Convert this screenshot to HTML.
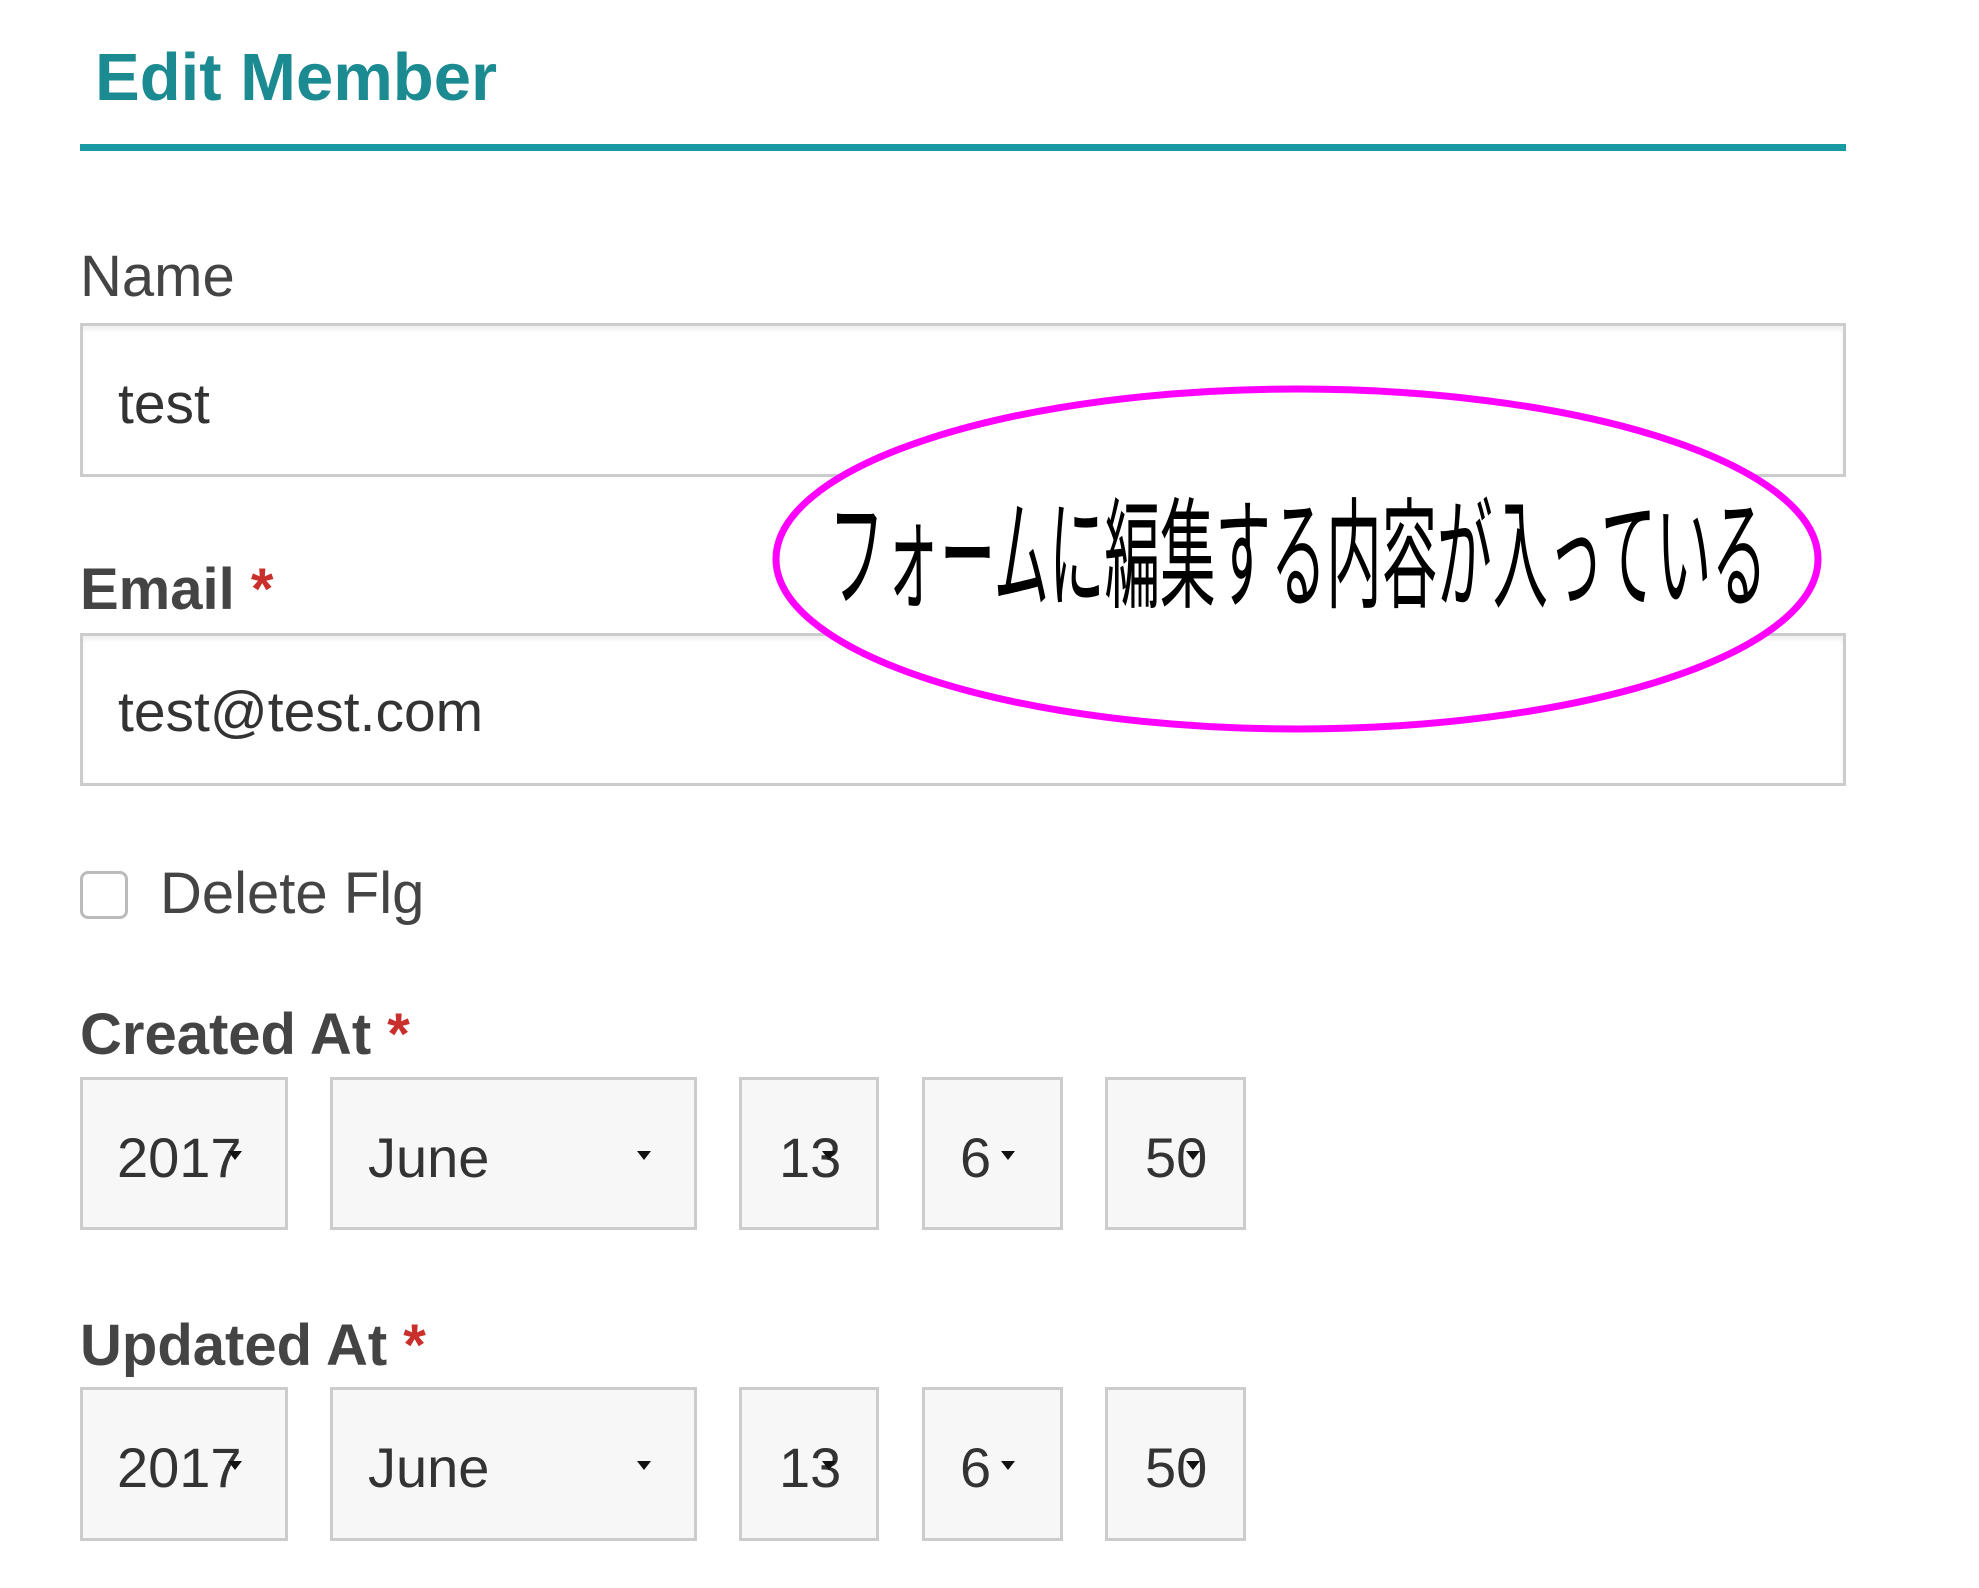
<!DOCTYPE html>
<html><head><meta charset="utf-8"><style>
body{margin:0;width:1979px;height:1588px;background:#fff;position:relative;overflow:hidden;font-family:"Liberation Sans",Arial,sans-serif;}
.a{position:absolute;line-height:1;white-space:nowrap;font-family:"Liberation Sans",Arial,sans-serif;}
.box{position:absolute;box-sizing:border-box;border:3px solid #ccc;}
.inp{background:#fff;box-shadow:inset 0 4px 4px rgba(0,0,0,.06);}
.sel{background:#f7f7f7;}
.t{font-size:56px;color:#333;}
.tri{position:absolute;width:0;height:0;border-left:7px solid transparent;border-right:7px solid transparent;border-top:9px solid #111;}
.star{color:#c9302c;}
</style></head><body>
<div class="a" style="left:95px;top:44px;font-size:67px;font-weight:bold;color:#1b8a91;">Edit Member</div>
<div style="position:absolute;left:80px;top:144px;width:1766px;height:7px;background:#1a9aa3;"></div>

<div class="a" style="left:80px;top:248px;font-size:58px;color:#444;">Name</div>
<div class="box inp" style="left:80px;top:323px;width:1766px;height:154px;"></div>
<div class="a t" style="left:118px;top:376px;font-size:57px;">test</div>

<div class="a" style="left:80px;top:561px;font-size:58px;font-weight:bold;color:#444;">Email <span class="star">*</span></div>
<div class="box inp" style="left:80px;top:633px;width:1766px;height:153px;"></div>
<div class="a t" style="left:118px;top:684px;font-size:57px;">test@test.com</div>

<div style="position:absolute;left:80px;top:871px;width:48px;height:48px;box-sizing:border-box;border:3px solid #bbb;border-radius:8px;background:#fff;"></div>
<div class="a" style="left:160px;top:865px;font-size:58px;color:#444;">Delete Flg</div>

<div class="a" style="left:80px;top:1006px;font-size:58px;font-weight:bold;color:#444;">Created At <span class="star">*</span></div>
<div class="box sel" style="left:80px;top:1077px;width:208px;height:153px;"></div>
<div class="box sel" style="left:330px;top:1077px;width:367px;height:153px;"></div>
<div class="box sel" style="left:739px;top:1077px;width:140px;height:153px;"></div>
<div class="box sel" style="left:922px;top:1077px;width:141px;height:153px;"></div>
<div class="box sel" style="left:1105px;top:1077px;width:141px;height:153px;"></div>
<div class="a t" style="left:117px;top:1130px;">2017</div>
<div class="a t" style="left:368px;top:1130px;">June</div>
<div class="a t" style="left:779px;top:1130px;">13</div>
<div class="a t" style="left:960px;top:1130px;">6</div>
<div class="a t" style="left:1145px;top:1130px;">50</div>
<div class="tri" style="left:228px;top:1151px;"></div>
<div class="tri" style="left:637px;top:1151px;"></div>
<div class="tri" style="left:822px;top:1151px;"></div>
<div class="tri" style="left:1001px;top:1151px;"></div>
<div class="tri" style="left:1186px;top:1151px;"></div>

<div class="a" style="left:80px;top:1317px;font-size:58px;font-weight:bold;color:#444;">Updated At <span class="star">*</span></div>
<div class="box sel" style="left:80px;top:1387px;width:208px;height:154px;"></div>
<div class="box sel" style="left:330px;top:1387px;width:367px;height:154px;"></div>
<div class="box sel" style="left:739px;top:1387px;width:140px;height:154px;"></div>
<div class="box sel" style="left:922px;top:1387px;width:141px;height:154px;"></div>
<div class="box sel" style="left:1105px;top:1387px;width:141px;height:154px;"></div>
<div class="a t" style="left:117px;top:1440px;">2017</div>
<div class="a t" style="left:368px;top:1440px;">June</div>
<div class="a t" style="left:779px;top:1440px;">13</div>
<div class="a t" style="left:960px;top:1440px;">6</div>
<div class="a t" style="left:1145px;top:1440px;">50</div>
<div class="tri" style="left:228px;top:1461px;"></div>
<div class="tri" style="left:637px;top:1461px;"></div>
<div class="tri" style="left:822px;top:1461px;"></div>
<div class="tri" style="left:1001px;top:1461px;"></div>
<div class="tri" style="left:1186px;top:1461px;"></div>

<svg style="position:absolute;left:0;top:0" width="1979" height="1588">
<ellipse cx="1297" cy="559" rx="521" ry="170" fill="#fff" stroke="#ff00ff" stroke-width="7"/>
</svg>
<div class="a" style="left:829px;top:486px;font-size:120px;color:#000;font-family:'Noto Sans CJK JP',sans-serif;font-weight:400;transform:scaleX(0.462);transform-origin:0 0;">フォームに編集する内容が入っている</div>
</body></html>
